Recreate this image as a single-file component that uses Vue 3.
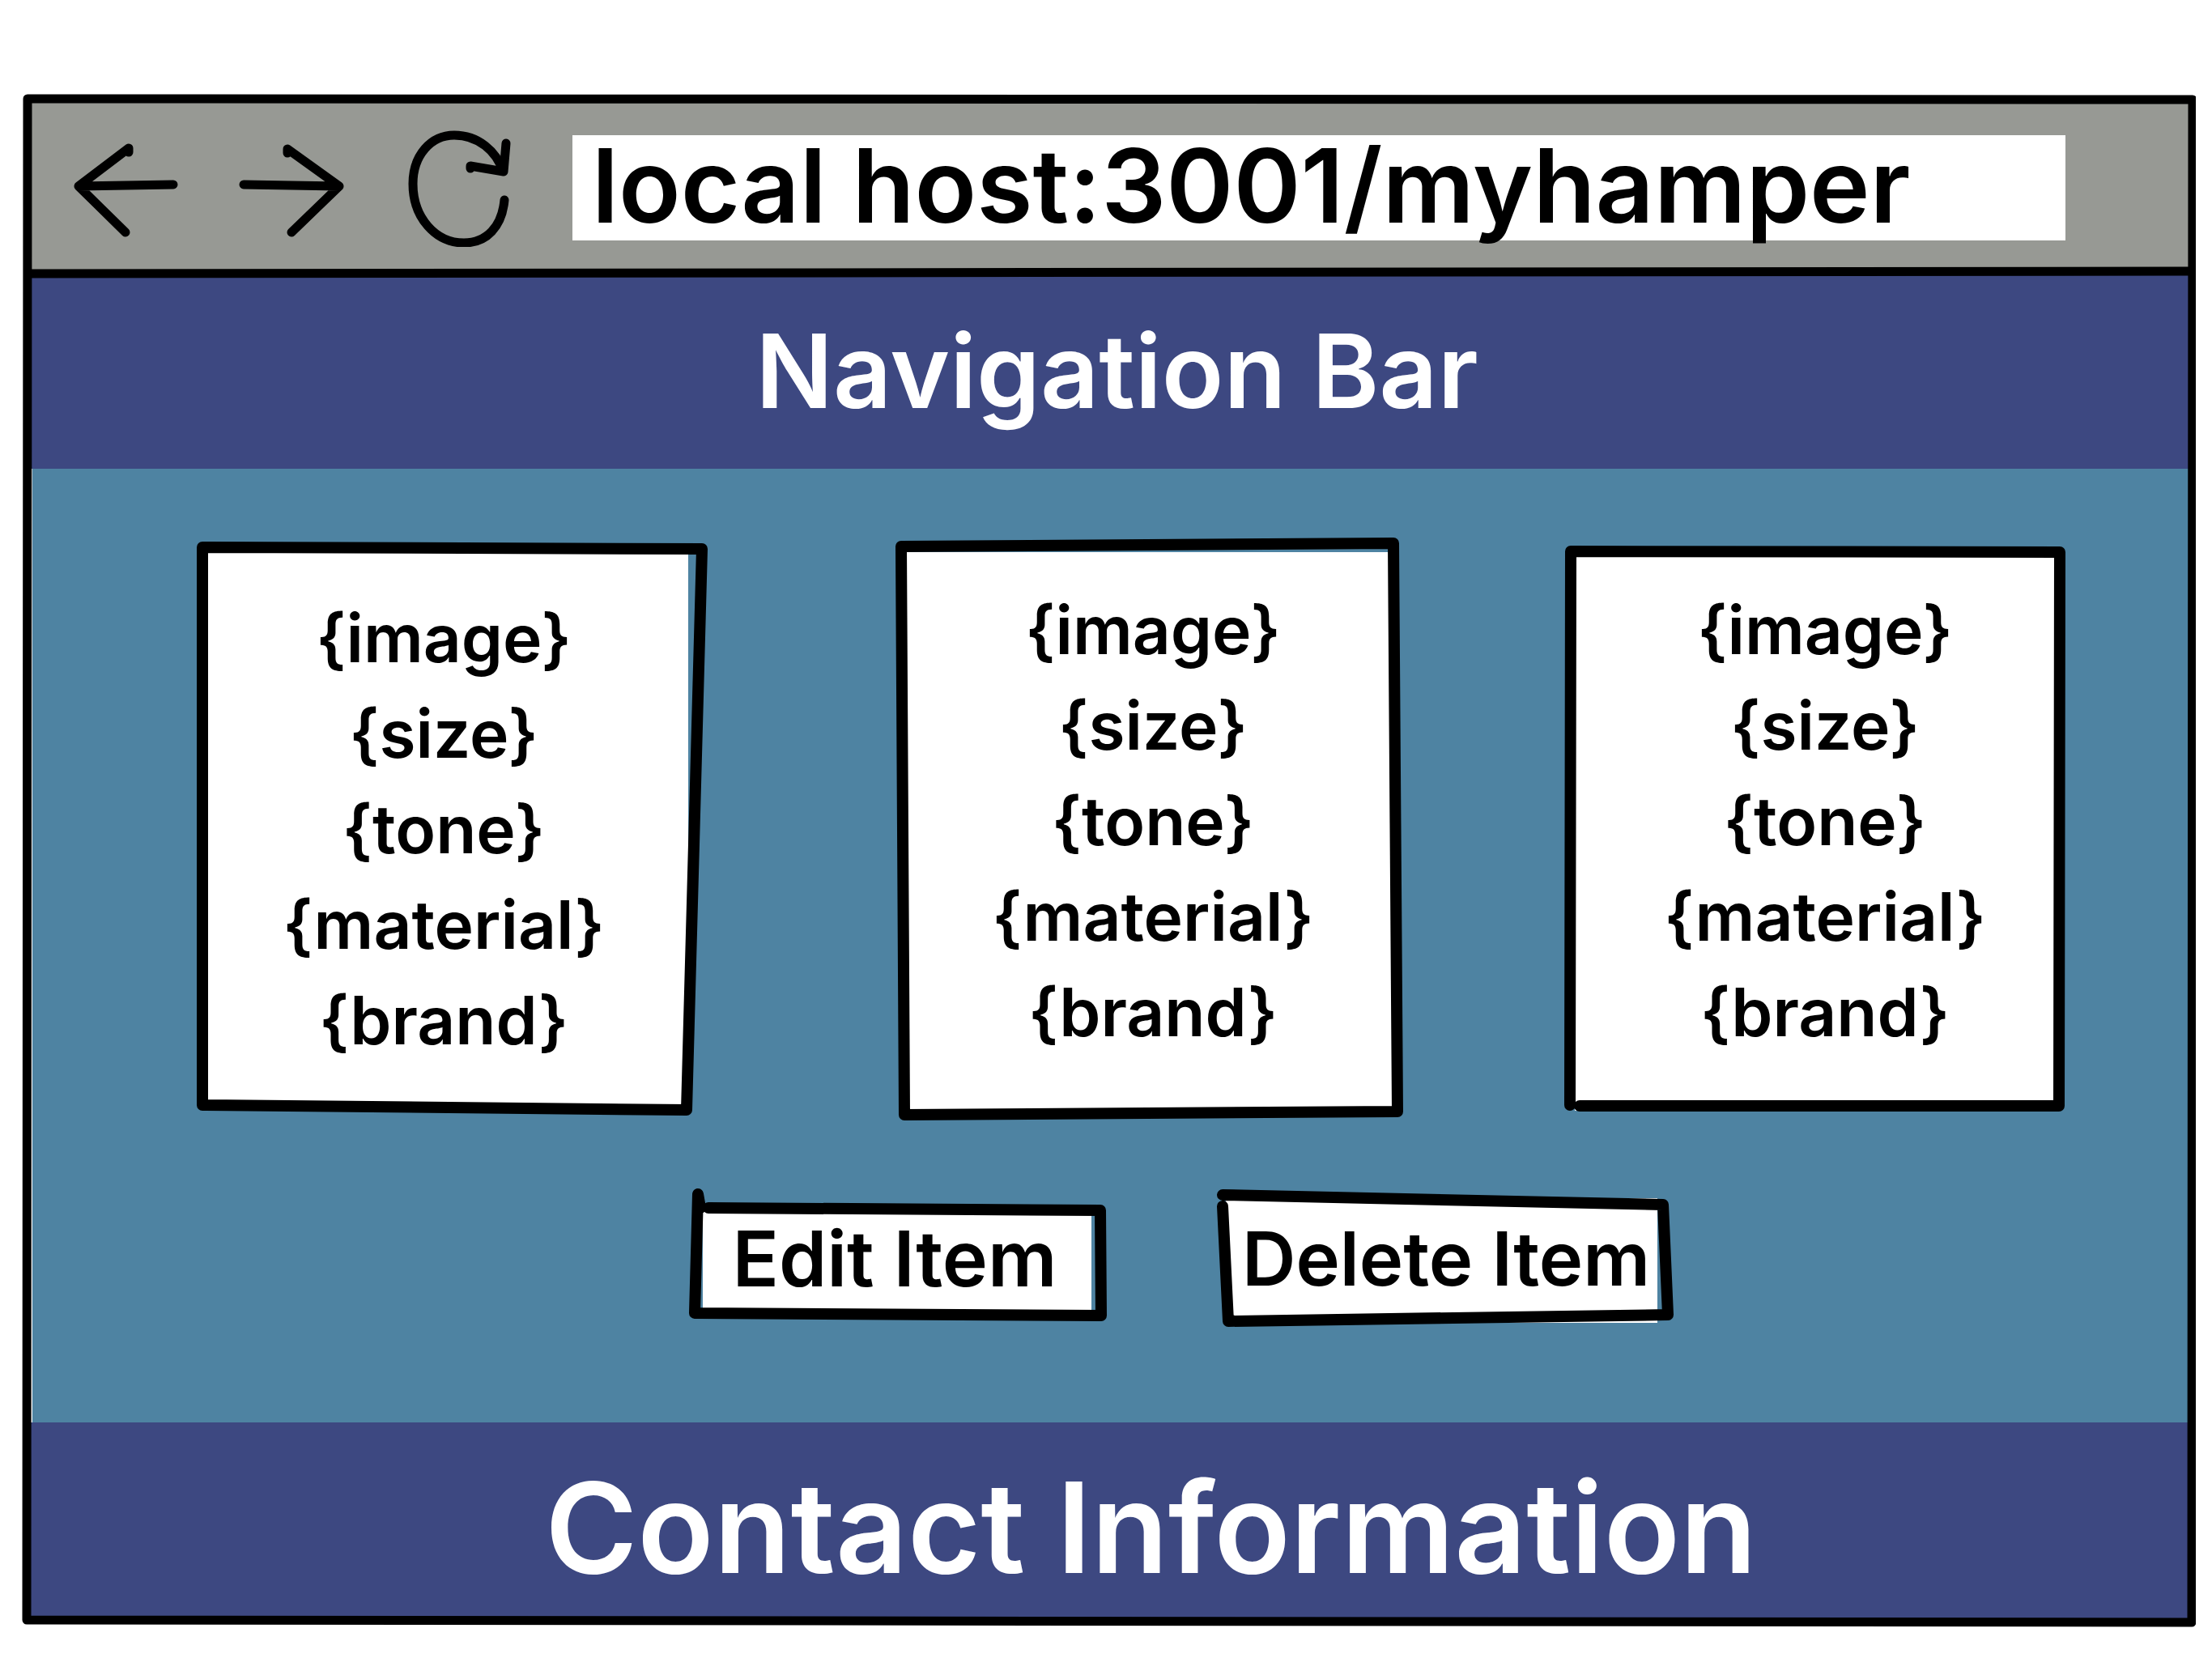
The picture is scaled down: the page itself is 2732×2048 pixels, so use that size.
<script setup>
import { ref } from 'vue'

const address = ref('local host:3001/myhamper')
const fields = ['{image}', '{size}', '{tone}', '{material}', '{brand}']

// Outlines are drawn in a 620 x 720 box that stretches with each card.
const cards = [
  { id: 'first', paper: 'M12 12H612V702L12 700Z', ink: 'M12 12L629 14L610 707L12 701Z' },
  { id: 'second', paper: 'M0 18H606L611 708L3 712Z', ink: 'M-1 11L607 7L612 709L3 713Z' },
  { id: 'third', paper: 'M1 16H600V702L1 708Z', ink: 'M-5 701L-4 17L600 18L599 702L7 702' },
]
</script>

<template>
  <div class="page">
    <div class="browser">
      <header class="toolbar">
        <button class="tool" type="button" aria-label="Back">
          <svg viewBox="0 0 140 150"><path d="M74 33V28L12 75L70 132M12 75L129 73" /></svg>
        </button>
        <button class="tool" type="button" aria-label="Forward">
          <svg viewBox="0 0 140 150"><path d="M65 34V29L129 75L70 132M129 75L11 73" /></svg>
        </button>
        <button class="tool" type="button" aria-label="Reload">
          <svg viewBox="0 0 140 150">
            <path d="M128 92C125 125 106 145 78 145C43 145 15 114 15 72C15 37 37 12 66 12C96 12 118 32 126 56" />
            <path d="M86 53V50L127 57L130 22" />
          </svg>
        </button>
        <input v-model="address" class="address" type="text" aria-label="Address" spellcheck="false" />
        <svg class="divider" viewBox="0 0 2673 16" preserveAspectRatio="none" aria-hidden="true">
          <path d="M0 10L2673 7" />
        </svg>
      </header>

      <nav class="navigation"><h1>Navigation Bar</h1></nav>

      <main class="content">
        <section class="cards">
          <article v-for="card in cards" :key="card.id" class="card" :class="card.id">
            <svg class="sketch" viewBox="0 0 620 720" preserveAspectRatio="none" aria-hidden="true">
              <path class="paper" :d="card.paper" />
              <path class="ink" :d="card.ink" />
            </svg>
            <ul>
              <li v-for="field in fields" :key="field">{{ field }}</li>
            </ul>
          </article>
        </section>

        <section class="actions">
          <button class="action edit" type="button">
            <svg class="sketch" viewBox="0 0 514 170" preserveAspectRatio="none" aria-hidden="true">
              <path class="paper" d="M20 20H500V156H20Z" />
              <path class="ink" d="M14 5L17 22M14 5L10 152L512 155L511 25L27 22" />
            </svg>
            <span>Edit Item</span>
          </button>
          <button class="action delete" type="button">
            <svg class="sketch" viewBox="0 0 554 170" preserveAspectRatio="none" aria-hidden="true">
              <path class="paper" d="M5 10H538V164H5Z" />
              <path class="ink" d="M1 6L545 18L551 154L8 162L1 20" />
            </svg>
            <span>Delete Item</span>
          </button>
        </section>
      </main>

      <footer class="contact"><h2>Contact Information</h2></footer>

      <svg class="frame" viewBox="0 0 2685 1894" preserveAspectRatio="none" aria-hidden="true">
        <path d="M7 6L2681 7L2680 1888L6 1885Z" />
      </svg>
    </div>
  </div>
</template>

<style>
body {
  margin: 0;
  background: #fff;
}
</style>

<style scoped>
.page {
  padding: 116px 20px 38px 27px;
  font-family: Inter, "Liberation Sans", sans-serif;
  font-weight: 600;
  color: #000;
}

h1,
h2,
ul {
  margin: 0;
  padding: 0;
  font-weight: 600;
  list-style: none;
}

button,
input {
  border: 0;
  padding: 0;
  background: none;
  font: inherit;
  color: inherit;
}

.browser {
  position: relative;
  padding: 6px;
}

.frame {
  position: absolute;
  inset: 0;
  width: 100%;
  height: 100%;
  pointer-events: none;
}

.frame path,
.divider path {
  fill: none;
  stroke: #000;
  stroke-width: 11px;
  stroke-linejoin: round;
  vector-effect: non-scaling-stroke;
}

.toolbar {
  position: relative;
  display: flex;
  align-items: flex-start;
  height: 214px;
  box-sizing: border-box;
  padding: 33px 155px 0 52px;
  background: #979994;
}

.divider {
  position: absolute;
  left: 0;
  bottom: -8px;
  width: 100%;
  height: 16px;
}

.tool {
  width: 140px;
  height: 150px;
  margin-right: 65px;
}

.tool svg {
  display: block;
  width: 140px;
  height: 150px;
  fill: none;
  stroke: #000;
  stroke-width: 11px;
  stroke-linecap: round;
  stroke-linejoin: round;
}

.address {
  flex: 1;
  min-width: 0;
  height: 160px;
  box-sizing: border-box;
  margin: 12px 0 0 7px;
  padding: 0 0 36px 24px;
  background: linear-gradient(#fff, #fff) no-repeat top / 100% 130px;
  font-size: 126px;
  line-height: 160px;
}

.navigation,
.contact {
  display: flex;
  align-items: center;
  justify-content: center;
  background: #3d4881;
  color: #fff;
}

.navigation {
  height: 243px;
  padding-left: 20px;
}

.navigation h1 {
  font-size: 126px;
  line-height: 150px;
}

.content {
  box-sizing: border-box;
  height: 1178px;
  padding-top: 85px;
  border-left: 7px solid #fff;
  background: #4e83a2;
}

.cards {
  display: grid;
  grid-template-columns: 198fr 620fr 256fr 620fr 210fr 620fr 142fr;
}

.card {
  position: relative;
  height: 720px;
  box-sizing: border-box;
  padding-top: 56px;
}

.first {
  grid-column: 2;
  padding-top: 66px;
}

.second {
  grid-column: 4;
}

.third {
  grid-column: 6;
}

.card ul {
  position: relative;
  font-size: 82px;
  line-height: 118px;
  text-align: center;
}

.sketch {
  position: absolute;
  inset: 0;
  width: 100%;
  height: 100%;
  overflow: visible;
}

.paper {
  fill: #fff;
}

.ink {
  fill: none;
  stroke: #000;
  stroke-width: 14px;
  stroke-linecap: round;
  stroke-linejoin: round;
  vector-effect: non-scaling-stroke;
}

.actions {
  display: grid;
  grid-template-columns: 808fr 514fr 147fr 554fr 643fr;
  margin-top: 86px;
}

.action {
  position: relative;
  height: 170px;
  line-height: 170px;
  white-space: nowrap;
}

.action span {
  position: relative;
}

.edit {
  grid-column: 2;
  font-size: 95px;
}

.delete {
  grid-column: 4;
  font-size: 92px;
}

.contact {
  height: 247px;
  padding-left: 104px;
}

.contact h2 {
  padding-top: 12px;
  font-size: 155px;
  line-height: 186px;
}
</style>
